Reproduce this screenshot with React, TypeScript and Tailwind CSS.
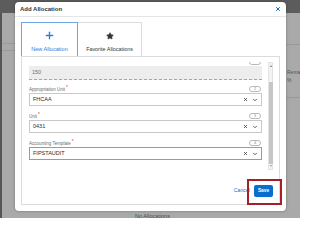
import { Plus, Star, X, ChevronDown } from "lucide-react";

type Field = {
  n: number;
  label: string;
  value: string;
  focused?: boolean;
};

const fields: Field[] = [
  { n: 2, label: "Appropriation Unit", value: "FHCAA" },
  { n: 3, label: "Unit", value: "0431" },
  { n: 4, label: "Accounting Template", value: "FIPSTAUDIT", focused: true },
];

function Badge({ n }: { n?: number }) {
  return (
    <span className="flex h-[6px] w-[12px] items-center justify-center rounded-full border border-[#b8b8b8] text-[4px] leading-none text-[#8a8a8a]">
      {n}
    </span>
  );
}

function Scrollbar() {
  return (
    <div className="flex h-full w-[5px] flex-col items-center border border-[#e3e3e3] bg-[#f3f3f3]">
      <span className="mt-[2px] h-0 w-0 border-x-[1.5px] border-b-[2px] border-x-transparent border-b-[#777]" />
      <div className="mt-[15px] w-[4px] flex-1 bg-[#c6c6c6]" />
      <span className="mb-[2px] mt-[1px] h-0 w-0 border-x-[1.5px] border-t-[2px] border-x-transparent border-t-[#999]" />
    </div>
  );
}

export default function App() {
  return (
    <div className="relative h-[218px] w-[300px] overflow-hidden bg-[#a9a9a9] font-['Liberation_Sans',Arial,sans-serif]">
      {/* dimmed page behind the dialog */}
      <div className="flex h-full flex-col">
        <div className="h-[13px] bg-[#5c5c5c]" />
        <div className="flex flex-1">
          <div className="flex w-[15px] flex-col border-l-[2px] border-[#555]">
            <div className="mt-[30px] h-px bg-[#9a9a9a]" />
            <div className="mt-[6px] h-px bg-[#9a9a9a]" />
          </div>
          <div className="flex flex-1 flex-col justify-end">
            <p className="-mb-[2px] ml-[4px] text-center text-[5.5px] leading-[7px] text-[#4e4e4e]">No Allocations</p>
          </div>
          <div className="flex w-[14px] flex-col overflow-hidden">
            <div className="mt-[31px] h-px bg-[#999]" />
            <p className="mt-[23px] ml-[1px] whitespace-nowrap text-[5px] leading-[9px] text-[#555]">Remaining</p>
            <p className="ml-[1px] text-[5px] leading-[6px] text-[#555]">%</p>
            <div className="mt-[14px] h-px bg-[#999]" />
          </div>
        </div>
      </div>

      {/* dialog */}
      <div className="absolute left-[15px] top-[2px] flex h-[209px] w-[271px] flex-col rounded-[4px] bg-white text-[#32363a] shadow-[0_0_3px_rgba(0,0,0,0.3)]">
        <div className="flex h-[15px] items-center justify-between border-b border-[#e5e5e5] pl-[5px] pr-[5px]">
          <span className="text-[6px] font-bold">Add Allocation</span>
          <X size={6} strokeWidth={4} color="#0a6ed1" />
        </div>

        <div className="flex flex-1 flex-col px-[6px] pb-[6px] pt-[5px]">
          <div className="flex">
            <div className="flex h-[35px] w-[57px] flex-col items-center border border-[#6fa5e6] text-[#2f7fd8]">
              <Plus size={11} strokeWidth={3} color="#2f7fd8" className="mt-[7px]" />
              <span className="mt-[6px] text-[5.6px] leading-none">New Allocation</span>
            </div>
            <div className="flex h-[35px] w-[64px] flex-col items-center border border-l-0 border-b-0 border-[#dcdcdc]">
              <Star size={8} fill="#32363a" color="#32363a" strokeWidth={1.5} className="mt-[9px]" />
              <span className="mt-[7px] text-[5.4px] leading-none">Favorite Allocations</span>
            </div>
          </div>

          <div className="-mt-px flex flex-1 flex-col border border-[#dcdcdc] pb-[7px] pl-[7px] pr-[6px] pt-[5px]">
            <div className="flex h-[108px] gap-[6px]">
              <div className="flex w-[233px] flex-col overflow-hidden">
                <div className="flex h-[3px] items-end justify-end overflow-hidden pr-px">
                  <Badge />
                </div>
                <div className="mt-[1px] flex h-[14px] items-center border-b border-dashed border-[#a6a6a6] bg-[#ededed] px-[3px] text-[5.5px] text-[#6a6d70]">
                  150
                </div>
                {fields.map((f, i) => (
                  <div key={f.n} className="flex flex-col">
                    <div
                      className={`flex h-[7px] items-end justify-between pr-px ${
                        i === 0 ? "mt-[5px]" : "mt-[6px]"
                      }`}
                    >
                      <span className="text-[4.5px] leading-none text-[#6a6d70]">
                        {f.label}
                        <span className="relative -top-[1.5px] ml-[1px] text-[#d0304a]">*</span>
                      </span>
                      <Badge n={f.n} />
                    </div>
                    <div
                      className={`mt-[1px] flex h-[13px] items-center justify-between border px-[3px] ${
                        f.focused ? "border-[#6aa3e8]" : "border-[#c9c9c9]"
                      }`}
                    >
                      <span className="text-[5.5px] font-medium text-[#2a2d30]">{f.value}</span>
                      <span className="flex items-center gap-[4px]">
                        <X size={5} strokeWidth={4} color="#4a4a4a" />
                        <ChevronDown size={6} strokeWidth={3.5} color="#4a4a4a" />
                      </span>
                    </div>
                  </div>
                ))}
              </div>
              <Scrollbar />
            </div>

            <div className="mt-auto flex items-center justify-end gap-[4px]">
              <span className="text-[5.2px] text-[#0a6ed1]">Cancel</span>
              <button className="flex h-[12px] w-[19px] items-center justify-center rounded-[2px] bg-[#0a6ed1] text-[4.8px] font-bold text-white">
                Save
              </button>
            </div>
          </div>
        </div>
      </div>

      {/* annotation box */}
      <div className="absolute left-[247px] top-[179px] h-[26px] w-[35px] border-[2px] border-[#a3202a]" />
    </div>
  );
}
